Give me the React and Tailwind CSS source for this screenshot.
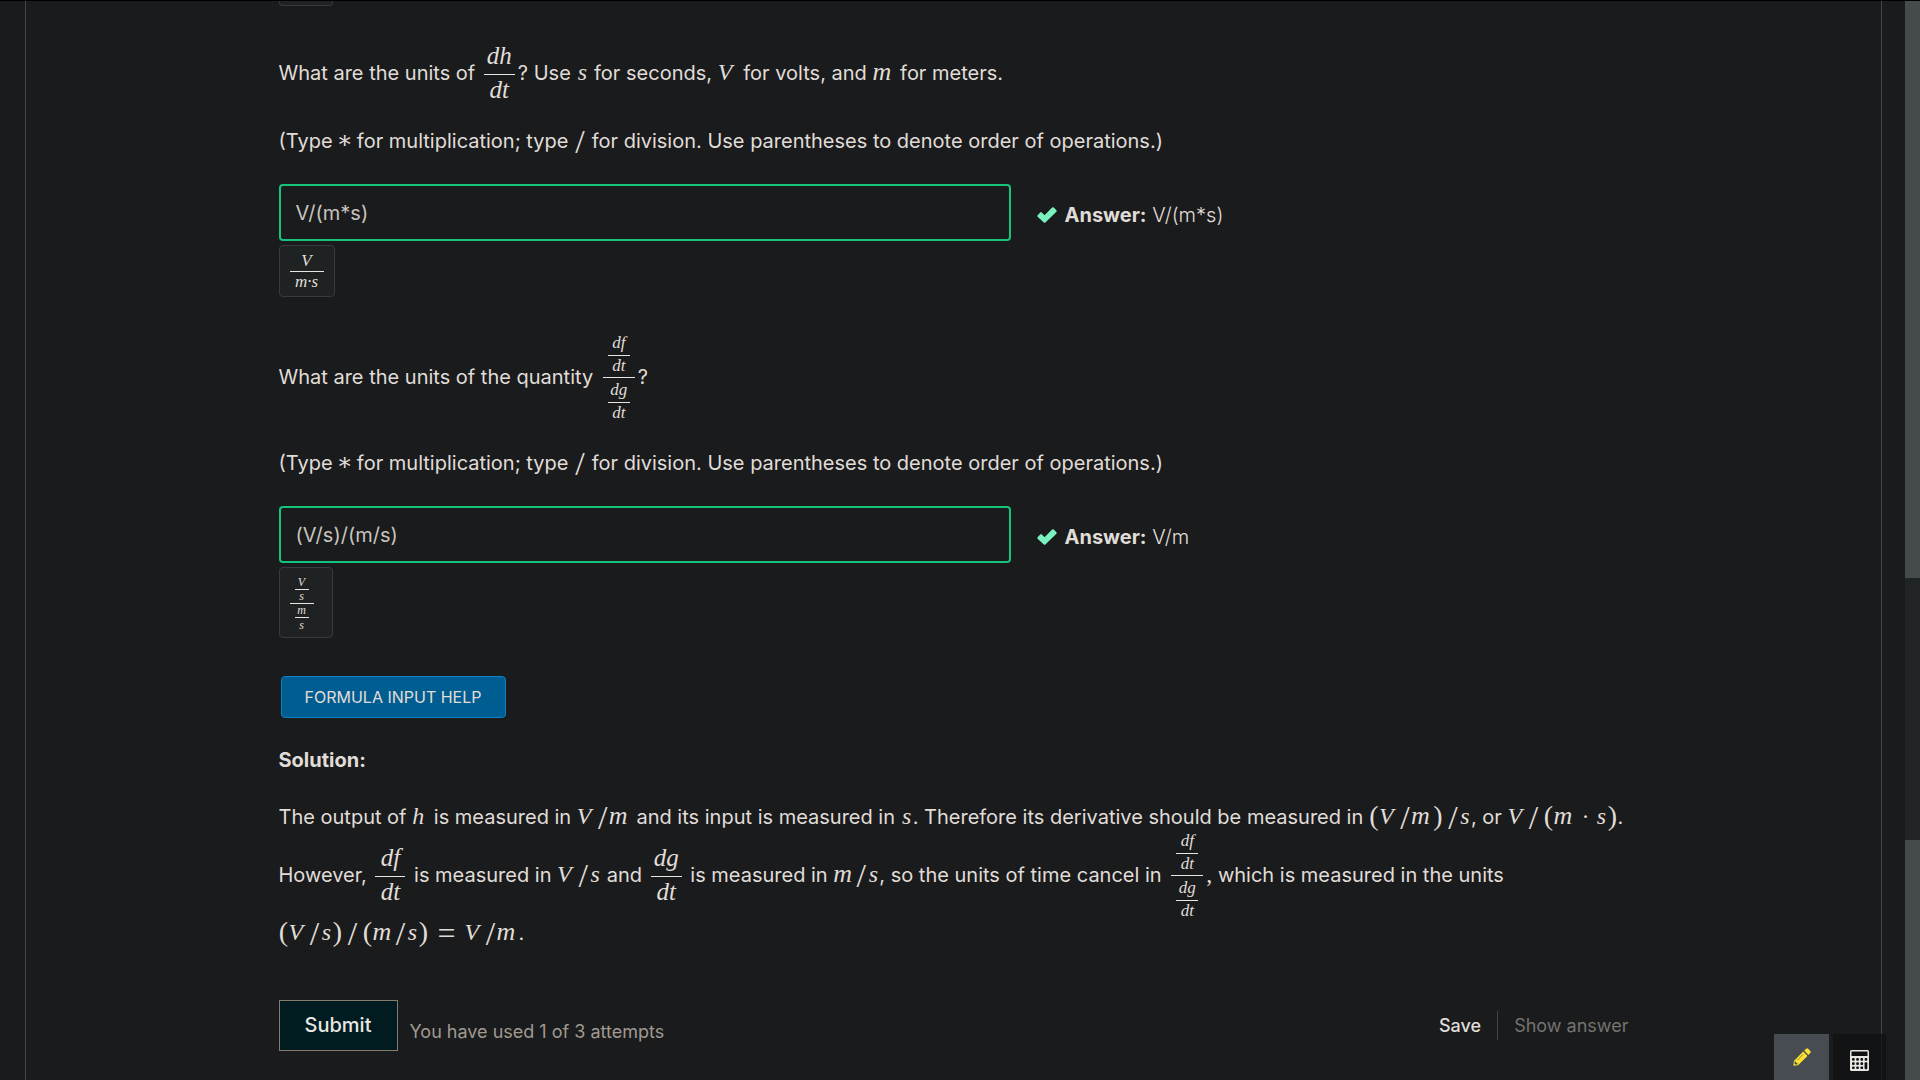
import React from "react";

const SERIF = "font-['Liberation_Serif','DejaVu_Serif',serif]";

const GLYPHS = {
  s: "w-[12px] justify-center italic",
  V: "w-[20px] justify-start italic",
  m: "w-[22px] justify-start text-[26px] italic",
  h: "w-[16px] justify-start italic",
  "/": "w-[12px] justify-center text-[34px] align-[-5px]",
  "(": "w-[10px] justify-center text-[28px] align-[-1px]",
  ")": "w-[10px] justify-center text-[28px] align-[-1px]",
  "∗": "w-[13px] justify-center",
  "·": "w-[20px] justify-center",
  "=": "w-[36px] justify-center text-[32px] align-[-4px]",
  " ": "w-[4px]",
};

function M({ children }) {
  return (
    <span className={`${SERIF} text-[24px] leading-none whitespace-nowrap`}>
      {[...children].map((c, i) => (
        <span key={i} className={`inline-flex h-6 items-baseline leading-6 whitespace-pre ${GLYPHS[c]}`}>
          {c}
        </span>
      ))}
    </span>
  );
}

function Frac({ top, bottom }) {
  return (
    <span className={`${SERIF} -my-2 mx-[3px] inline-flex min-w-[30px] flex-col items-stretch pb-1 text-center align-middle text-[25px] leading-7 italic`}>
      <span className="border-b border-[#e8e6e3] px-[3px] pb-1">{top}</span>
      <span className="pt-px">{bottom}</span>
    </span>
  );
}

function SmallFrac({ top, bottom }) {
  return (
    <span className="flex min-w-[22px] flex-col items-stretch">
      <span className="border-b border-[#e8e6e3] pb-[2px]">{top}</span>
      <span>{bottom}</span>
    </span>
  );
}

function TallFrac() {
  return (
    <span className={`${SERIF} -my-6 mr-[3px] ml-1 inline-flex flex-col items-stretch pb-px text-center align-middle text-[17px] leading-5 italic`}>
      <span className="flex justify-center border-b border-[#e8e6e3] px-[5px] pb-px">
        <SmallFrac top="df" bottom="dt" />
      </span>
      <span className="flex justify-center px-[5px] pt-[2px]">
        <SmallFrac top="dg" bottom="dt" />
      </span>
    </span>
  );
}

function Hint() {
  return (
    <p className="leading-7">
      (Type <M>∗</M> for multiplication; type <M>/</M> for division. Use parentheses to denote order of operations.)
    </p>
  );
}

function Check() {
  return (
    <svg viewBox="0 0 20 16" className="h-4 w-5" fill="#79f2c0" aria-hidden="true">
      <path d="M0.6 8.2 3.2 5.4Q4 4.7 4.8 5.4L7.6 8.2 15.1 0.6Q16 -0.1 16.8 0.6L19.4 3.2Q20 4 19.4 4.8L8.4 15.5Q7.6 16.2 6.8 15.5L0.6 9.7Q0 9 0.6 8.2Z" />
    </svg>
  );
}

function Answer({ id, value, answer }) {
  return (
    <div className="mt-[29px] flex items-center">
      <input
        id={id}
        aria-label="Your answer"
        defaultValue={value}
        className="h-[57px] w-[732px] rounded-[4px] border-2 border-[#14c47c] bg-transparent px-[15px] text-[20px] text-[#c8c4bd] outline-none"
      />
      <label htmlFor={id} className="ml-[26px] flex items-center gap-2 pt-1 leading-7">
        <Check />
        <span>
          <b className="font-bold">Answer:</b> <span className="font-light">{answer}</span>
        </span>
      </label>
    </div>
  );
}

function Pencil() {
  return (
    <svg viewBox="0 0 18 18" className="h-[18px] w-[18px]" aria-hidden="true">
      <g fill="#fde02f">
        <path d="M10.2 3.6 14.5 7.9 5 17.2 0.4 17.8 0.9 13Z" />
        <path d="M11.2 2.6 13.2 0.7Q14.2 0 15.2 0.8L17.3 2.9Q18.1 3.9 17.3 4.9L15.4 6.9Z" />
      </g>
      <path d="M1.8 13.6 3 13.4 3.2 15 4.6 15.2 4.4 16.4 2.6 16.6 1.5 15.5Z" fill="#454b50" />
      <path d="M4.4 12.2 10.2 6.3" stroke="#8f8535" strokeWidth="1" />
    </svg>
  );
}

function Calculator() {
  return (
    <svg viewBox="0 0 19 21" className="h-[21px] w-[19px]" aria-hidden="true">
      <rect width="19" height="21" rx="1.5" fill="#e8e6e3" />
      <g fill="#101113">
        <rect x="1.5" y="1.5" width="16" height="4.5" />
        {[8, 12.2, 16.4].map((y) =>
          [2, 6.2, 10.4].map((x) => <rect key={`${x}-${y}`} x={x} y={y} width="2.7" height="2.7" rx="1" />)
        )}
        <rect x="14.6" y="8" width="2.7" height="2.7" rx="1" />
        <rect x="14.6" y="12.2" width="2.7" height="7" rx="1" />
      </g>
    </svg>
  );
}

export default function App() {
  return (
    <div className="relative flex h-screen overflow-hidden border-t border-black bg-[#1a1b1d] font-['Inter',sans-serif] text-[20px] text-[#e0ddd8]">
      <main className="mr-[23px] ml-[25px] flex flex-1 justify-center border-x border-[#45484a]">
        <div className="w-full max-w-[1350px]">
          <div className="h-[5px] w-[54px] rounded-b-[4px] border-x border-b border-[#373b3d] bg-[#1f2223]" />

          <p className="mt-[39px] leading-[56px]">
            What are the units of <Frac top="dh" bottom="dt" />? Use <M>s</M> for seconds, <M>V</M> for volts, and{" "}
            <M>m</M> for meters.
          </p>
          <div className="mt-[26px]">
            <Hint />
          </div>
          <Answer id="answer-1" value="V/(m*s)" answer="V/(m*s)" />
          <div className={`${SERIF} mt-1 flex h-[52px] w-14 flex-col rounded-[4px] border border-[#373b3d] bg-[#1f2223] px-[10px] pt-[5px] text-center text-[17px] leading-5 italic`}>
            <span className="border-b border-[#e8e6e3]">V</span>
            <span>m·s</span>
          </div>

          <p className="mt-[52px] leading-[56px]">
            What are the units of the quantity <TallFrac />?
          </p>
          <div className="mt-[44px]">
            <Hint />
          </div>
          <Answer id="answer-2" value="(V/s)/(m/s)" answer="V/m" />
          <div className={`${SERIF} mt-1 flex h-[71px] w-[54px] flex-col items-start rounded-[4px] border border-[#373b3d] bg-[#1f2223] pt-2 pl-[10px] text-[12px] leading-3 italic`}>
            <span className="flex w-6 flex-col items-center border-b border-[#e8e6e3] pb-px text-center">
              <span className="w-[14px] border-b border-[#e8e6e3] pb-px">V</span>
              <span>s</span>
            </span>
            <span className="flex w-6 flex-col items-center text-center">
              <span className="w-[14px] border-b border-[#e8e6e3] pb-px">m</span>
              <span className="pt-px">s</span>
            </span>
          </div>

          <button className="mt-[38px] ml-[2px] block h-[42px] rounded-[4px] border border-[#0a82c8] bg-[#005d91] px-[23px] text-[16px]">
            FORMULA INPUT HELP
          </button>

          <p className="mt-7 leading-7 font-bold">Solution:</p>
          <p className="mt-[14px] leading-[58px]">
            The output of <M>h</M> is measured in <M>V/m</M> and its input is measured in <M>s</M>. Therefore its
            derivative should be measured in <M>(V/m) /s</M>, or <M>V/ (m·s)</M>. <span>However,</span>{" "}
            <Frac top="df" bottom="dt" /> is measured in <M>V/s</M> and <Frac top="dg" bottom="dt" /> is measured in{" "}
            <M>m/s</M>, so the units of time cancel in <TallFrac />
            <span className={`${SERIF} text-[24px] leading-none`}>,</span> which is measured in the units{" "}
            <M>(V/s) / (m/s)=V/m</M>.
          </p>

          <div className="mt-[38px] flex items-center">
            <button className="h-[51px] w-[119px] border border-[#857c6d] bg-[#001c20] pb-[2px] text-[20px] font-medium text-[#e8e6e3]">
              Submit
            </button>
            <span className="ml-3 pt-3 text-[18px] leading-6 text-[#a09a90]">You have used 1 of 3 attempts</span>
            <div className="ml-auto flex items-center text-[18px] leading-[29px]">
              <button className="pr-4 font-medium">Save</button>
              <button className="border-l border-[#404446] pl-4 text-[#75736f]">Show answer</button>
            </div>
          </div>
        </div>
      </main>

      <div className="flex w-[15px] flex-col bg-[#202425]">
        <div className="h-[577px] bg-[#454a4d]" />
        <div className="mt-[262px] flex-1 bg-[#454a4d]" />
      </div>

      <div className="absolute right-[34px] bottom-0 flex gap-1">
        <button aria-label="Notes" className="flex h-[46px] w-[55px] items-start justify-center bg-[#464c51] pt-[14px]">
          <Pencil />
        </button>
        <button aria-label="Calculator" className="flex h-[46px] w-[53px] items-start justify-center bg-[#101113]/80 pt-4">
          <Calculator />
        </button>
      </div>
    </div>
  );
}
